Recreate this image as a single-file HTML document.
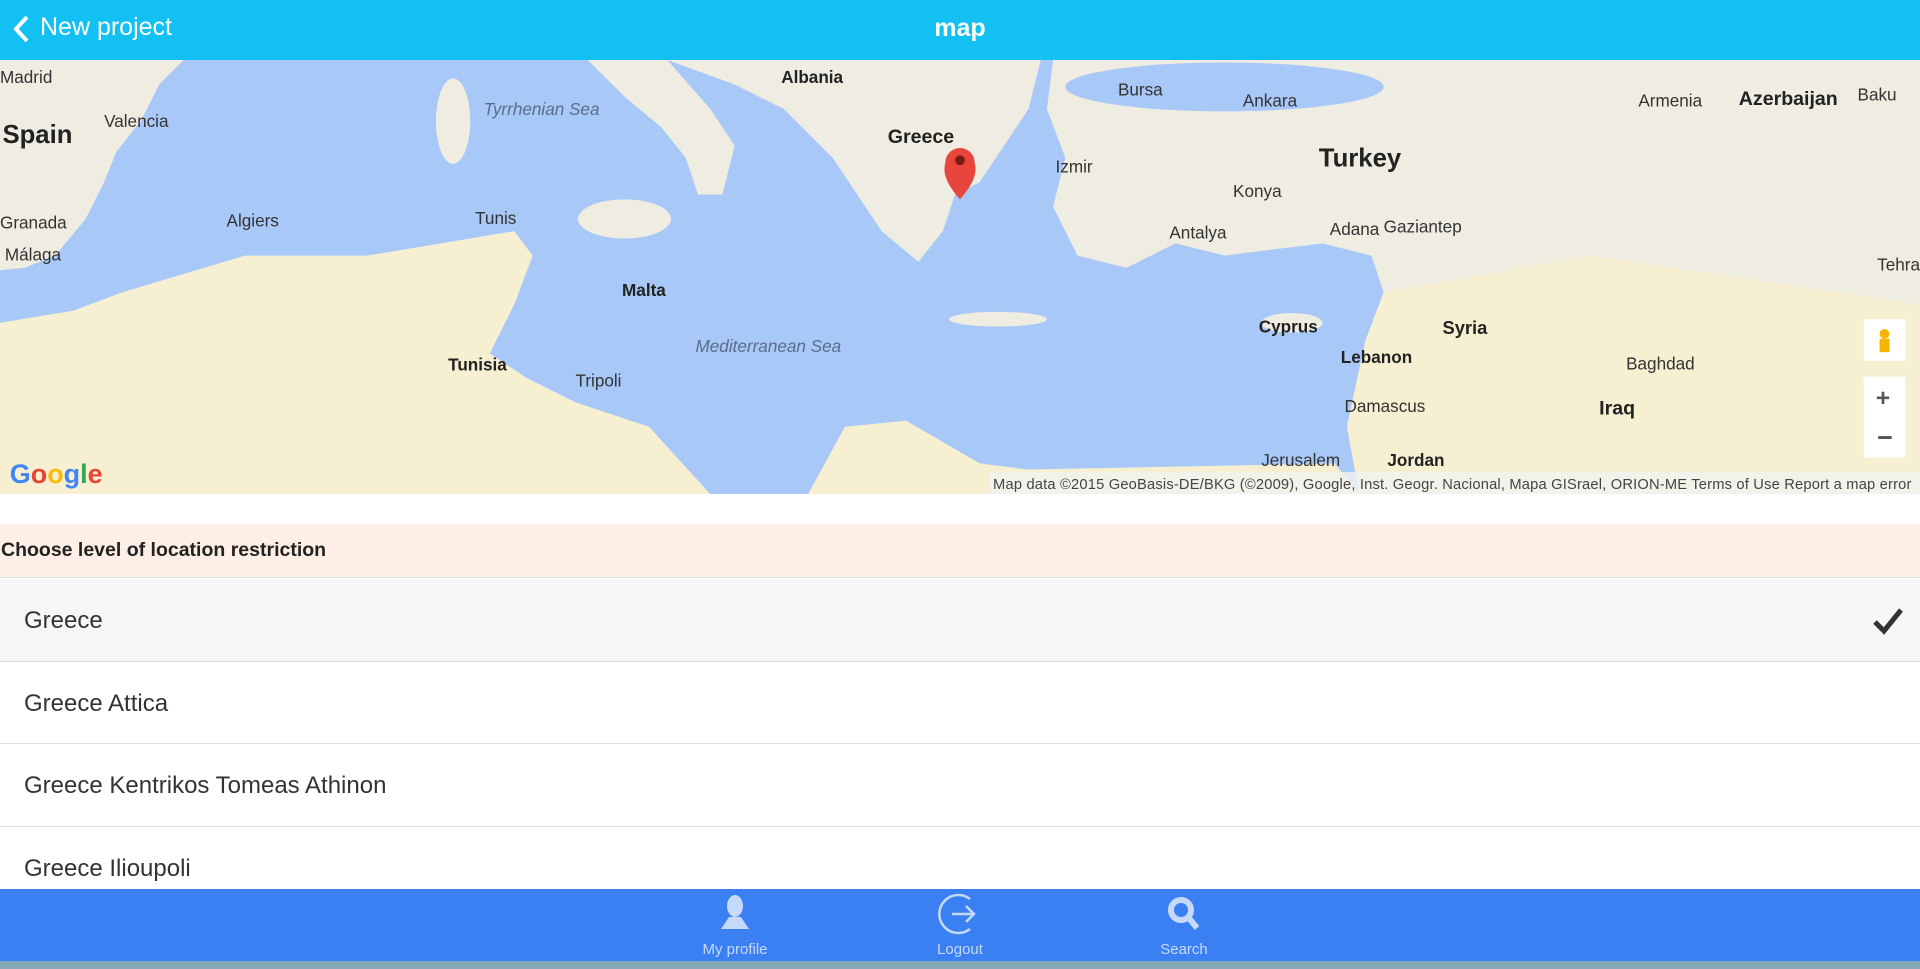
<!DOCTYPE html>
<html><head><meta charset="utf-8"><style>
*{margin:0;padding:0;box-sizing:border-box}
body{width:1920px;height:969px;overflow:hidden;font-family:"Liberation Sans",sans-serif;background:#fff;position:relative}
.hdr{position:absolute;left:0;top:0;width:1920px;height:60px;background:#12c1f2;color:#fff}
.hdr .back{position:absolute;left:40px;top:13px;font-size:25px}
.hdr .title{position:absolute;left:0;width:100%;text-align:center;top:14px;font-size:25px;font-weight:bold}
.map{position:absolute;left:0;top:60px;width:1920px;height:434px}
.sec{position:absolute;left:0;top:524px;width:1920px;height:54px;background:#fdefe5;border-bottom:1px solid #ddd;font-weight:bold;font-size:19.5px;padding:15px 0 0 1px;color:#222}
.row{position:absolute;left:0;width:1920px;border-bottom:1px solid #ddd;font-size:24px;color:#333;padding-left:24px}
.nav{position:absolute;left:0;top:889px;width:1920px;height:72px;background:#3a80f2}
.nav .it{position:absolute;top:0;width:120px;text-align:center;color:#c7d9fb;font-size:15px}
.nav .it span{position:absolute;left:0;width:120px;top:52px}
.task{position:absolute;left:0;top:961px;width:1920px;height:8px;background:#86a8b8}
</style></head><body>
<div class="hdr">
<svg style="position:absolute;left:10px;top:14px" width="22" height="30" viewBox="0 0 22 30"><path d="M17 3 L6 15 L17 27" stroke="#fff" stroke-width="4" fill="none"/></svg>
<div class="back">New project</div><div class="title">map</div></div>
<svg class="map" viewBox="0 0 1568 355" preserveAspectRatio="none">
<rect width="1568" height="355" fill="#a8c8f8"/>
<g fill="#efece2">
<polygon points="0,0 150,0 130,20 115,50 95,75 85,100 70,130 45,160 20,170 0,172"/>
<polygon points="480,0 545,0 580,40 600,70 590,110 570,110 560,80 540,55 510,30"/>
<polygon points="545,0 850,0 840,40 820,70 800,100 780,110 770,140 750,165 720,140 700,110 680,80 640,40 600,20"/>
<polygon points="860,0 1568,0 1568,355 1110,355 1100,300 1115,230 1130,190 1120,160 1080,150 1000,160 960,150 920,170 880,160 860,120 870,80 855,40"/>
<ellipse cx="510" cy="130" rx="38" ry="16"/><ellipse cx="370" cy="50" rx="14" ry="35"/><ellipse cx="815" cy="212" rx="40" ry="6"/><ellipse cx="1055" cy="215" rx="25" ry="8"/>
</g>
<g fill="#f6efd2">
<polygon points="0,215 60,205 100,190 200,160 300,160 360,150 420,140 435,160 420,200 400,240 430,260 470,280 530,300 580,355 0,355"/>
<polygon points="660,355 690,300 740,295 800,330 840,335 1090,330 1110,355"/>
<polygon points="1130,190 1300,160 1568,200 1568,355 1110,355 1100,300 1115,230"/>
</g>
<ellipse cx="1000" cy="22" rx="130" ry="20" fill="#a8c8f8"/>
<g font-family="Liberation Sans" font-size="14" fill="#222" font-weight="bold">
<text x="2" y="68" font-size="21">Spain</text><text x="638" y="19">Albania</text><text x="725" y="68" font-size="16">Greece</text>
<text x="1077" y="87" font-size="21">Turkey</text><text x="1420" y="37" font-size="16">Azerbaijan</text><text x="1178" y="224" font-size="15">Syria</text>
<text x="1028" y="223">Cyprus</text><text x="1095" y="248">Lebanon</text><text x="1306" y="290" font-size="16">Iraq</text><text x="1133" y="332">Jordan</text>
<text x="508" y="193">Malta</text><text x="366" y="254">Tunisia</text>
</g>
<g font-family="Liberation Sans" font-size="14" fill="#333">
<text x="0" y="19">Madrid</text><text x="85" y="55">Valencia</text><text x="0" y="138">Granada</text><text x="4" y="164">Málaga</text>
<text x="185" y="136">Algiers</text><text x="388" y="134">Tunis</text><text x="470" y="267">Tripoli</text><text x="913" y="29">Bursa</text>
<text x="1015" y="38">Ankara</text><text x="862" y="92">Izmir</text><text x="1007" y="112">Konya</text><text x="955" y="146">Antalya</text>
<text x="1086" y="143">Adana</text><text x="1130" y="141">Gaziantep</text><text x="1328" y="253">Baghdad</text><text x="1098" y="288">Damascus</text>
<text x="1030" y="332">Jerusalem</text><text x="1338" y="38">Armenia</text><text x="1517" y="33">Baku</text><text x="1533" y="172">Tehra</text>
</g>
<g font-family="Liberation Sans" font-size="14" fill="#5a6d8a" font-style="italic"><text x="395" y="45">Tyrrhenian Sea</text><text x="568" y="239">Mediterranean Sea</text></g>
<path d="M784 114 C772 100 770 92 772 84 A12 12 0 0 1 796 84 C798 92 796 100 784 114Z" fill="#e8453c"/><circle cx="784" cy="82" r="4" fill="#7a1a14"/>
<rect x="1522" y="212" width="34" height="34" fill="#fff"/><rect x="1522" y="259" width="34" height="66" fill="#fff"/>
<text x="1532" y="283" font-size="20" fill="#555" font-weight="bold">+</text><text x="1533" y="316" font-size="22" fill="#555" font-weight="bold">−</text>
<circle cx="1539" cy="224" r="4" fill="#f5b400"/><rect x="1535" y="228" width="8" height="11" fill="#f5b400"/>
<text x="8" y="346" font-size="22" font-weight="bold" fill="#4285f4">G<tspan fill="#ea4335">o</tspan><tspan fill="#fbbc05">o</tspan><tspan fill="#4285f4">g</tspan><tspan fill="#34a853">l</tspan><tspan fill="#ea4335">e</tspan></text>
<rect x="808" y="337" width="760" height="18" fill="#f3f3f0" opacity="0.8"/>
<text x="811" y="351" font-size="12" fill="#444" textLength="750">Map data ©2015 GeoBasis-DE/BKG (©2009), Google, Inst. Geogr. Nacional, Mapa GISrael, ORION-ME      Terms of Use    Report a map error</text>
</svg>
<div class="sec">Choose level of location restriction</div>
<div class="row" style="top:579px;height:83px;background:#f6f6f6;padding-top:28px">Greece
<svg style="position:absolute;right:16px;top:28px" width="32" height="28" viewBox="0 0 32 28"><path d="M3 15 L12 24 L29 3" stroke="#333" stroke-width="5" fill="none"/></svg></div>
<div class="row" style="top:662px;height:82px;padding-top:28px">Greece Attica</div>
<div class="row" style="top:744px;height:83px;padding-top:28px">Greece Kentrikos Tomeas Athinon</div>
<div class="row" style="top:827px;height:62px;padding-top:28px;border:none">Greece Ilioupoli</div>
<div class="nav">
<div class="it" style="left:675px"><svg width="40" height="44" viewBox="0 0 40 44" style="margin-top:4px"><ellipse cx="20" cy="13" rx="8" ry="11" fill="#c7d9fb"/><path d="M14 24 L26 24 L34 36 L6 36Z" fill="#c7d9fb"/></svg><span>My profile</span></div>
<div class="it" style="left:900px"><svg width="44" height="46" viewBox="0 0 44 46" style="margin-top:2px"><path d="M32 8 A19 19 0 1 0 32 38" stroke="#c7d9fb" stroke-width="2.5" fill="none"/><path d="M14 23 L34 23 M28 15 L36 23 L28 31" stroke="#c7d9fb" stroke-width="2.5" fill="none"/></svg><span>Logout</span></div>
<div class="it" style="left:1124px"><svg width="40" height="44" viewBox="0 0 40 44" style="margin-top:4px"><circle cx="17" cy="17" r="10" stroke="#c7d9fb" stroke-width="6" fill="none"/><path d="M24 24 L33 35" stroke="#c7d9fb" stroke-width="6"/></svg><span>Search</span></div>
</div>
<div class="task"></div>
</body></html>
